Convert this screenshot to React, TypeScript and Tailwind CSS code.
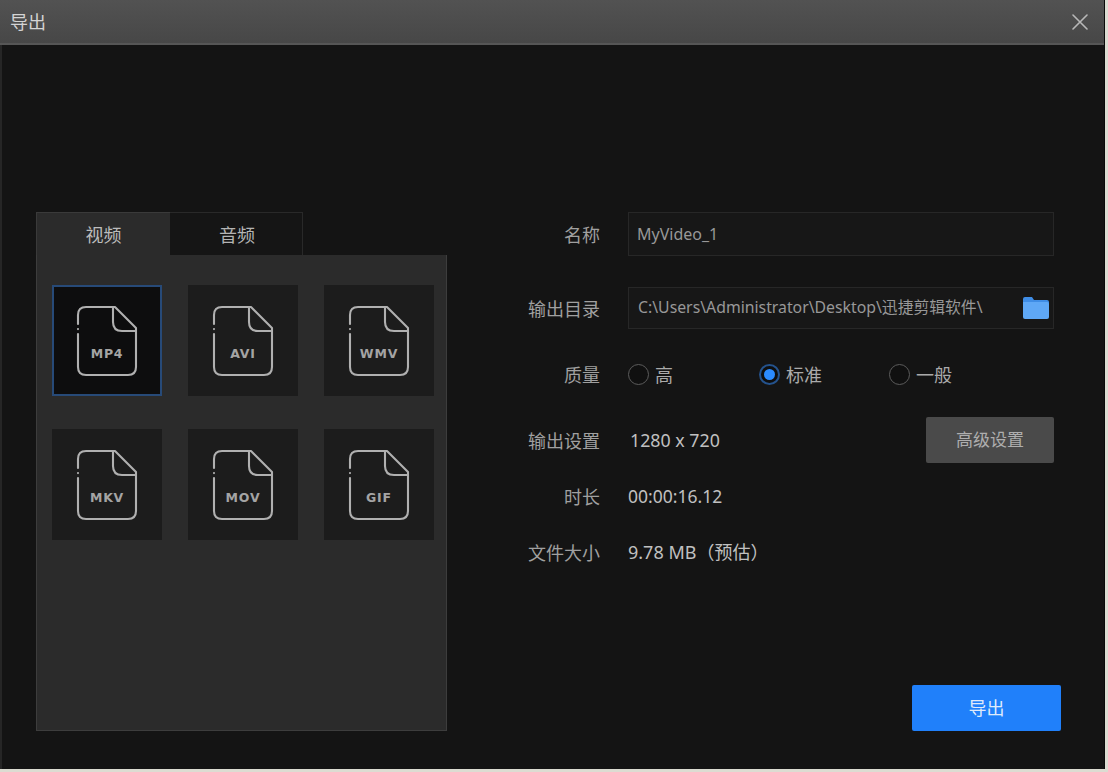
import React from "react";

const font = { fontFamily: '"Noto Sans","Noto Sans CJK SC",sans-serif' };

function FileIcon({ label }: { label: string }) {
  return (
    <svg width="62" height="72" viewBox="0 0 62 72" fill="none" stroke="#b0b0b0" strokeWidth="2.1" strokeLinecap="round" strokeLinejoin="round">
      <path d="M2 19V10Q2 2 10 2H39L60 23V62Q60 70 52 70H10Q2 70 2 62V29" />
      <path d="M2 24v.1" />
      <path d="M37 2V17Q37 26 46 26H60" />
      <text x="31" y="52.5" textAnchor="middle" fill="#a4a4a4" stroke="none" fontSize="12.5" fontWeight="700" letterSpacing="0.8" style={{ fontFamily: '"DejaVu Sans",sans-serif' }}>
        {label}
      </text>
    </svg>
  );
}

function Card({ label, active }: { label: string; active?: boolean }) {
  return (
    <div className={active
      ? "flex h-[111px] w-[110px] items-center justify-center border-2 border-[#274a78] bg-[#0d0d0e]"
      : "flex h-[111px] w-[110px] items-center justify-center bg-[#1c1c1c]"}>
      <FileIcon label={label} />
    </div>
  );
}

function Label({ children }: { children: React.ReactNode }) {
  return <div className="w-[153px] whitespace-nowrap pl-[78px] pt-[2px] text-right text-[18px] leading-6 text-[#a0a0a0]">{children}</div>;
}

function Radio({ label, checked, width }: { label: string; checked?: boolean; width: string }) {
  return (
    <div className={`flex items-center gap-[6px] ${width}`}>
      {checked ? (
        <span className="flex h-[21px] w-[21px] items-center justify-center rounded-full border-2 border-[#24528c] bg-[#0e0e0e]">
          <span className="h-[11px] w-[11px] rounded-full bg-[#2b8bff]" />
        </span>
      ) : (
        <span className="h-[21px] w-[21px] rounded-full border border-[#5c5c5c] bg-[#101010]" />
      )}
      <span className="whitespace-nowrap pt-[1px] text-[18px] leading-6 text-[#aaaaaa]">{label}</span>
    </div>
  );
}

export default function App() {
  return (
    <div className="h-[772px] w-[1108px] overflow-hidden bg-[#dcdcd2]" style={font}>
      <div className="flex h-[769px] w-[1105px] flex-col border-r border-[#0a0a0a] bg-[#141414]">
        <div className="flex h-[45px] shrink-0 items-center justify-between border-b-2 border-[#565656] bg-gradient-to-b from-[#525252] to-[#474747] pl-[10px] pr-[16px]">
          <span className="text-[18px] leading-6 text-[#d4d4d4]">导出</span>
          <svg width="16" height="16" viewBox="0 0 16 16" stroke="#b8b8b8" strokeWidth="1.6" strokeLinecap="round">
            <path d="M1 1L15 15M15 1L1 15" />
          </svg>
        </div>

        <div className="flex flex-1 border-l-2 border-[#262626] pl-[34px] pt-[167px]">
          <div className="flex w-[411px] flex-col">
            <div className="flex h-[43px]">
              <div className="flex w-[134px] items-center justify-center border-l border-t border-[#3a3a3a] bg-[#2b2b2b] pt-[3px] text-[18px] text-[#bcbcbc]">视频</div>
              <div className="flex w-[133px] items-center justify-center border-r border-t border-[#292929] bg-[#151515] pl-[2px] pt-[3px] text-[18px] text-[#b4b4b4]">音频</div>
            </div>
            <div className="h-[476px] border border-t-0 border-[#3d3d3d] bg-[#2b2b2b] px-[15px] pt-[30px]">
              <div className="grid grid-cols-[110px_110px_110px] gap-x-[26px] gap-y-[33px]">
                <Card label="MP4" active />
                <Card label="AVI" />
                <Card label="WMV" />
                <Card label="MKV" />
                <Card label="MOV" />
                <Card label="GIF" />
              </div>
            </div>
          </div>

          <div className="flex flex-1 flex-col">
            <div className="flex h-[44px] items-center">
              <Label>名称</Label>
              <div className="ml-[28px] flex h-full w-[426px] items-center border border-[#272727] bg-[#171717] pb-[1px] pl-[8px] pt-[1px] text-[16px] text-[#989898]">MyVideo_1</div>
            </div>
            <div className="mt-[31px] flex h-[42px] items-center">
              <Label>输出目录</Label>
              <div className="ml-[28px] flex h-full w-[426px] items-center justify-between border border-[#272727] bg-[#171717] pl-[9px] pr-[4px] text-[15.8px] text-[#989898]">
                <span className="whitespace-nowrap">C:\Users\Administrator\Desktop\迅捷剪辑软件\</span>
                <svg width="26" height="22" viewBox="0 0 26 22">
                  <path d="M0 2Q0 0 2 0H9L11 3H24Q26 3 26 5V10H0Z" fill="#3f8de6" />
                  <path d="M0 5H24Q26 5 26 7V20Q26 22 24 22H2Q0 22 0 20Z" fill="#5fa8f6" />
                </svg>
              </div>
            </div>
            <div className="mt-[34px] flex h-[22px] items-center">
              <Label>质量</Label>
              <div className="ml-[28px] flex">
                <Radio label="高" width="w-[131px]" />
                <Radio label="标准" checked width="w-[130px]" />
                <Radio label="一般" width="w-[100px]" />
              </div>
            </div>
            <div className="mt-[32px] flex h-[46px] items-center">
              <Label>输出设置</Label>
              <span className="ml-[30px] w-[296px] text-[17.8px] text-[#c0c0c0]">1280 x 720</span>
              <button className="h-full w-[128px] rounded-[2px] bg-[#4a4a4a] text-[17px] text-[#aeaeae]">高级设置</button>
            </div>
            <div className="mt-[21px] flex h-[24px] items-center">
              <Label>时长</Label>
              <span className="ml-[28px] text-[17.5px] text-[#c0c0c0]">00:00:16.12</span>
            </div>
            <div className="mt-[32px] flex h-[24px] items-center">
              <Label>文件大小</Label>
              <span className="ml-[28px] text-[18px] text-[#c0c0c0]">9.78 MB（预估）</span>
            </div>
            <button className="ml-[465px] mt-[121px] h-[46px] w-[149px] rounded-[2px] bg-[#2080fa] text-[18px] text-[#dfeafb]">导出</button>
          </div>
        </div>
      </div>
    </div>
  );
}
